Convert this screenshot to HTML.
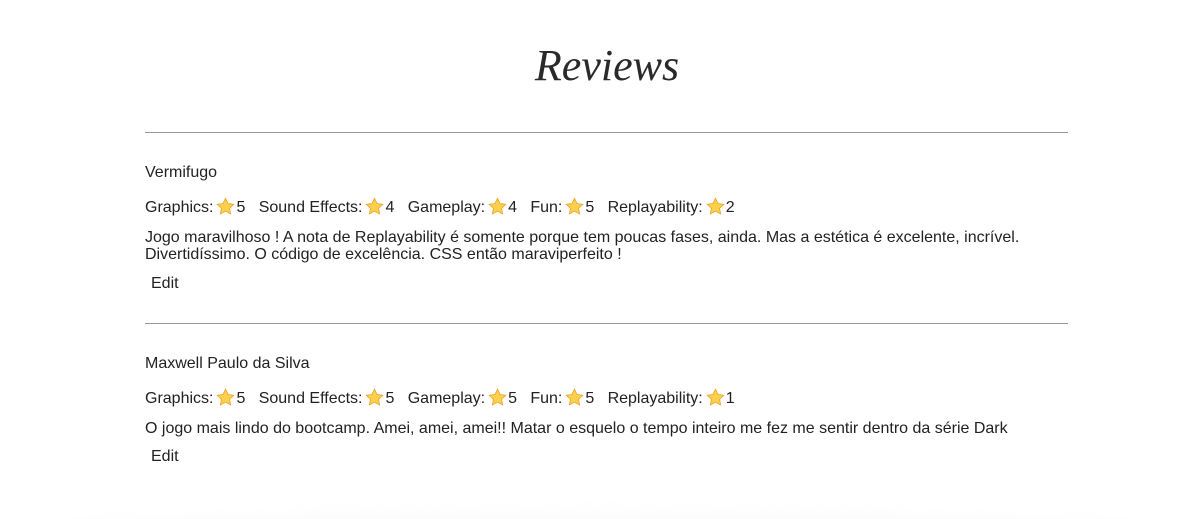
<!DOCTYPE html>
<html><head><meta charset="utf-8"><style>
html,body{margin:0;background:#fff;width:1198px;height:519px;overflow:hidden}
body{font-family:"Liberation Sans",sans-serif;color:#222;font-size:16px;position:relative}
.t{position:absolute;white-space:nowrap;line-height:18px}
h1{position:absolute;left:0;width:1214px;text-align:center;top:38px;margin:0;font:italic 44px "Liberation Serif",serif;color:#2a2a2a;line-height:56px}
hr{position:absolute;left:145px;width:923px;margin:0;border:0;border-top:1px solid #999;height:0}
.s{display:inline-block;width:19px;height:19px;vertical-align:-4px;margin:0 1px 0 3px}
.shadow{position:absolute;left:60px;right:60px;top:514px;height:30px;background:#fafafa;border-radius:50%;filter:blur(6px)}
</style></head><body>
<h1>Reviews</h1>
<svg width="0" height="0" style="position:absolute"><defs><symbol id="st" viewBox="0 0 24 24"><path d="M12 1.5l3.2 6.8 7.3.9-5.4 5 1.4 7.3L12 17.9l-6.5 3.6 1.4-7.3-5.4-5 7.3-.9z" fill="#fcd04a" stroke="#e9a22a" stroke-width="1"/></symbol></defs></svg>
<hr style="top:132px">
<div class="t" style="left:145px;top:164px">Vermifugo</div>
<div class="t" style="left:145px;top:197px">Graphics:<svg class="s"><use href="#st"/></svg>5&nbsp;&nbsp; Sound Effects:<svg class="s"><use href="#st"/></svg>4&nbsp;&nbsp; Gameplay:<svg class="s"><use href="#st"/></svg>4&nbsp;&nbsp; Fun:<svg class="s"><use href="#st"/></svg>5&nbsp;&nbsp; Replayability:<svg class="s"><use href="#st"/></svg>2</div>
<div class="t" style="left:145px;top:229px">Jogo maravilhoso ! A nota de Replayability é somente porque tem poucas fases, ainda. Mas a estética é excelente, incrível.</div>
<div class="t" style="left:145px;top:246px">Divertidíssimo. O código de excelência. CSS então maraviperfeito !</div>
<div class="t" style="left:151px;top:275px">Edit</div>
<hr style="top:323px">
<div class="t" style="left:145px;top:355px">Maxwell Paulo da Silva</div>
<div class="t" style="left:145px;top:388px">Graphics:<svg class="s"><use href="#st"/></svg>5&nbsp;&nbsp; Sound Effects:<svg class="s"><use href="#st"/></svg>5&nbsp;&nbsp; Gameplay:<svg class="s"><use href="#st"/></svg>5&nbsp;&nbsp; Fun:<svg class="s"><use href="#st"/></svg>5&nbsp;&nbsp; Replayability:<svg class="s"><use href="#st"/></svg>1</div>
<div class="t" style="left:145px;top:420px">O jogo mais lindo do bootcamp. Amei, amei, amei!! Matar o esquelo o tempo inteiro me fez me sentir dentro da série Dark</div>
<div class="t" style="left:151px;top:448px">Edit</div>
<div class="shadow"></div>
</body></html>
